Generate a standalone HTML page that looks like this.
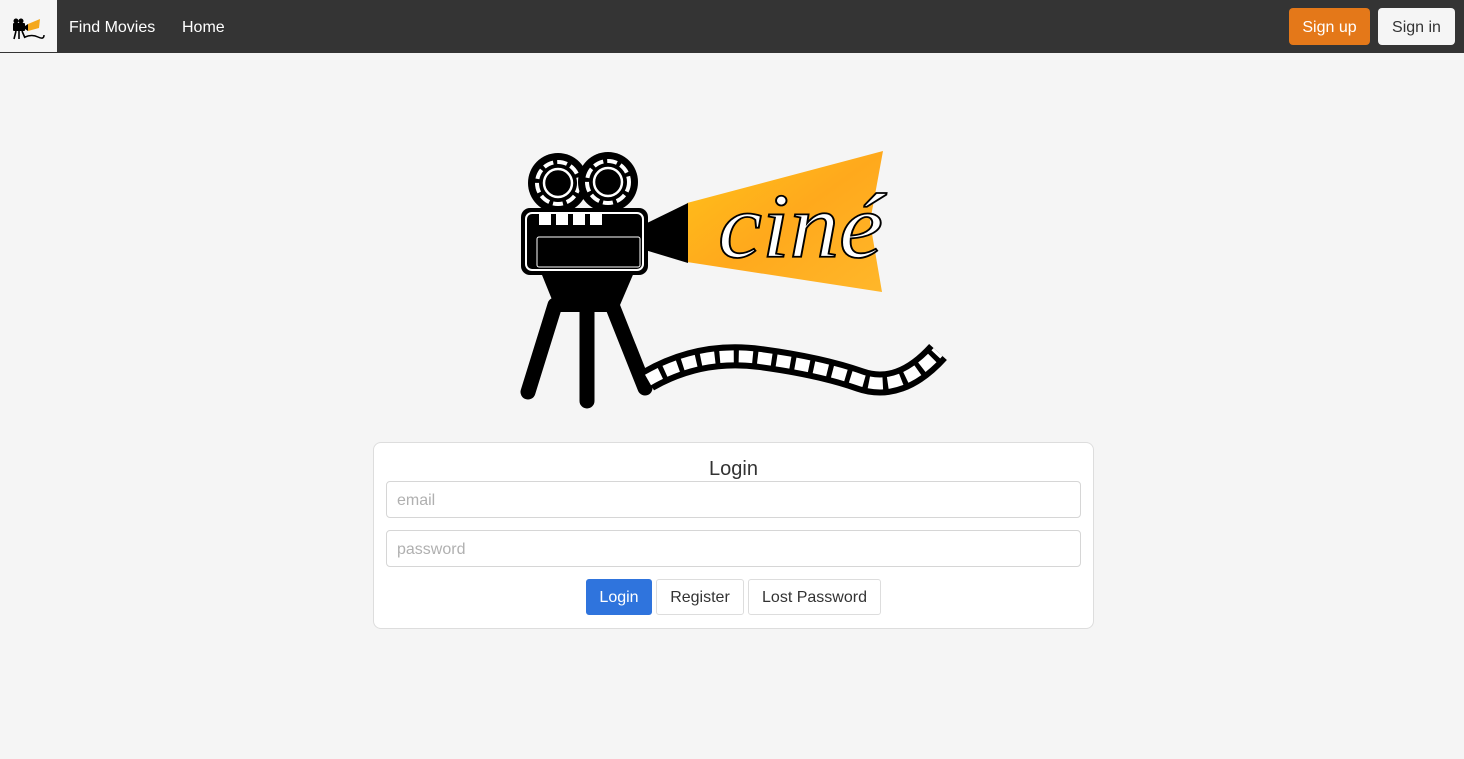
<!DOCTYPE html>
<html><head><meta charset="utf-8"><style>
*{box-sizing:border-box;margin:0;padding:0}
body{width:1464px;height:759px;background:#f5f5f5;font-family:"Liberation Sans",sans-serif;position:relative;overflow:hidden}
.nav{position:absolute;left:0;top:0;width:1464px;height:53px;background:#343434}
.logobox{position:absolute;left:0;top:0;width:57px;height:52px;background:#f5f5f5}
.nl{position:absolute;top:19px;color:#fff;font-size:16px}
.btn{position:absolute;border-radius:4px;font-size:16px;display:flex;align-items:center;justify-content:center;padding-top:2px}
.card{position:absolute;left:373px;top:442px;width:721px;height:187px;background:#fff;border:1px solid #ddd;border-radius:8px}
.inp{position:absolute;left:386px;width:695px;height:37px;border:1px solid #d6d6d6;border-radius:4px;background:#fff;color:#b0b0b0;font-size:16px;padding:10px 10px}
.b2{position:absolute;top:579px;height:36px;border:1px solid #ddd;border-radius:3px;background:#fff;color:#333;font-size:16px;display:flex;align-items:center;justify-content:center;padding-top:2px}
</style></head><body>
<div class="nav"></div>
<div class="logobox">
<svg width="57" height="52" viewBox="0 0 57 52">
<circle cx="16" cy="21" r="2.5" fill="#000"/><circle cx="21" cy="21" r="2.5" fill="#000"/>
<rect x="13" y="23" width="12" height="8" rx="1" fill="#000"/>
<polygon points="25,26 28,24 28,31 25,29" fill="#000"/>
<polygon points="28,24 40,19 39,28 28,31" fill="#f4a81c"/>
<path d="M16 31 L14 39 M19 31 L19 39 M22 31 L25 38" stroke="#000" stroke-width="1.6"/>
<path d="M25 37 Q32 34 38 37 T44 35" stroke="#000" stroke-width="1.5" fill="none"/>
</svg></div>
<div class="nl" style="left:69px">Find Movies</div>
<div class="nl" style="left:182px">Home</div>
<div class="btn" style="left:1289px;top:8px;width:81px;height:37px;background:#e47819;color:#fff">Sign up</div>
<div class="btn" style="left:1378px;top:8px;width:77px;height:37px;background:#f5f5f5;color:#333">Sign in</div>

<svg style="position:absolute;left:0;top:0" width="1464" height="759">
<defs><linearGradient id="g" x1="0" y1="0" x2="1" y2="1"><stop offset="0" stop-color="#ffc21a"/><stop offset=".5" stop-color="#ffa91c"/><stop offset="1" stop-color="#ffb72a"/></linearGradient></defs>
<polygon points="687,203 883,151 870,222 882,292 687,262" fill="url(#g)"/>
<polygon points="645,224 688,203 688,263 645,250" fill="#000"/>
<circle cx="558" cy="183" r="30" fill="#000"/><circle cx="558" cy="183" r="21" fill="none" stroke="#fff" stroke-width="4" stroke-dasharray="10 4"/><circle cx="558" cy="183" r="14" fill="#000" stroke="#fff" stroke-width="2.5"/>
<circle cx="608" cy="182" r="30" fill="#000"/><circle cx="608" cy="182" r="21" fill="none" stroke="#fff" stroke-width="4" stroke-dasharray="10 4"/><circle cx="608" cy="182" r="14" fill="#000" stroke="#fff" stroke-width="2.5"/>
<polygon points="540,270 635,270 617,312 557,312" fill="#000"/>
<path d="M555 305 L528 392 M587 310 L587 401 M612 305 L645 388" stroke="#000" stroke-width="15" stroke-linecap="round"/>
<rect x="521" y="208" width="127" height="67" rx="9" fill="#000"/>
<rect x="526" y="213" width="117" height="57" rx="6" fill="none" stroke="#fff" stroke-width="2"/>
<rect x="537" y="237" width="103" height="30" rx="2" fill="#000" stroke="#fff" stroke-width="1"/>
<g fill="#fff"><rect x="539" y="213" width="12" height="12"/><rect x="556" y="213" width="12" height="12"/><rect x="573" y="213" width="12" height="12"/><rect x="590" y="213" width="12" height="12"/></g>
<path d="M648 380 Q700 350 760 358 T860 380 T938 352" stroke="#000" stroke-width="24" fill="none"/>
<path d="M648 380 Q700 350 760 358 T860 380 T938 352" stroke="#fff" stroke-width="12" fill="none" stroke-dasharray="14 5"/>
<text x="718" y="257" font-family="Liberation Serif,serif" font-style="italic" font-size="92" fill="#fff" stroke="#000" stroke-width="1.8" textLength="165" lengthAdjust="spacingAndGlyphs">ciné</text>
</svg>

<div class="card"></div>
<div style="position:absolute;left:373px;width:721px;top:458px;text-align:center;font-size:20px;color:#333">Login</div>
<div class="inp" style="top:481px">email</div>
<div class="inp" style="top:530px">password</div>
<div class="b2" style="left:586px;width:66px;background:#2f74dd;border-color:#2f74dd;color:#fff">Login</div>
<div class="b2" style="left:656px;width:88px">Register</div>
<div class="b2" style="left:748px;width:133px">Lost Password</div>
</body></html>
